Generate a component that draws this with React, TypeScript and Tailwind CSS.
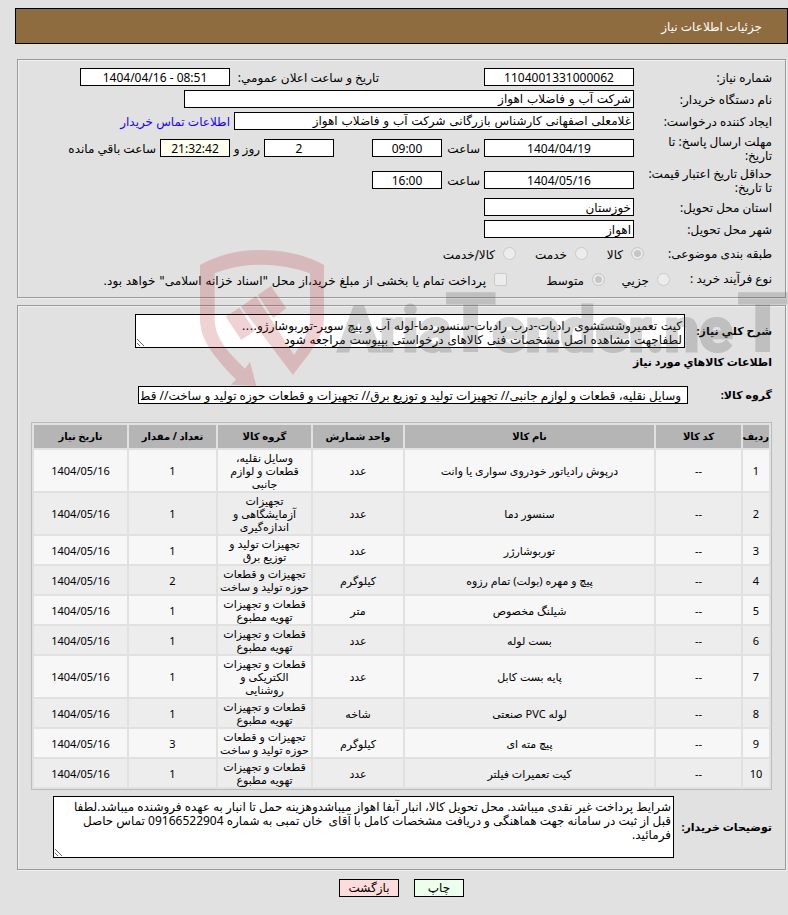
import type { ReactNode } from "react";

// ===================================================
// DATA
// ===================================================

const items = [
    { name: "درپوش رادیاتور خودروی سواری یا وانت", unit: "عدد", group: "وسایل نقلیه،\nقطعات و لوازم\nجانبی", count: 1 },
    { name: "سنسور دما", unit: "عدد", group: "تجهیزات\nآزمایشگاهی و\nاندازه‌گیری", count: 1 },
    { name: "توربوشارژر", unit: "عدد", group: "تجهیزات تولید و\nتوزیع برق", count: 1 },
    { name: "پیچ و مهره (بولت) تمام رزوه", unit: "کیلوگرم", group: "تجهیزات و قطعات\nحوزه تولید و ساخت", count: 2 },
    { name: "شیلنگ مخصوص", unit: "متر", group: "قطعات و تجهیزات\nتهویه مطبوع", count: 1 },
    { name: "بست لوله", unit: "عدد", group: "قطعات و تجهیزات\nتهویه مطبوع", count: 1 },
    { name: "پایه بست کابل", unit: "عدد", group: "قطعات و تجهیزات\nالکتریکی و\nروشنایی", count: 1 },
    { name: "لوله PVC صنعتی", unit: "شاخه", group: "قطعات و تجهیزات\nتهویه مطبوع", count: 1 },
    { name: "پیچ مته ای", unit: "کیلوگرم", group: "تجهیزات و قطعات\nحوزه تولید و ساخت", count: 3 },
    { name: "کیت تعمیرات فیلتر", unit: "عدد", group: "قطعات و تجهیزات\nتهویه مطبوع", count: 1 },
];

const description =
    "کیت تعمیروشستشوی رادیات-درب رادیات-سنسوردما-لوله آب و پیچ سوپر-توربوشارژو....\nلطفاجهت مشاهده اصل مشخصات فنی کالاهای درخواستی بپیوست مراجعه شود";

const buyerNotes =
    "شرایط پرداخت غیر نقدی میباشد. محل تحویل کالا، انبار آبفا اهواز میباشدوهزینه حمل تا انبار به عهده فروشنده میباشد.لطفا\nقبل از ثبت در سامانه جهت هماهنگی و دریافت مشخصات کامل با آقای  خان تمبی به شماره 09166522904 تماس حاصل\nفرمائید.";

const goodsGroups =
    "وسایل نقلیه، قطعات و لوازم جانبی// تجهیزات تولید و توزیع برق// تجهیزات و قطعات حوزه تولید و ساخت// قطعات و تجهیزات تهویه مطبوع";

const box = "h-[18px] border border-black px-[2px] text-[12px] leading-[14px]";

// ===================================================
// FORM PARTS
// ===================================================

function Row({ id, label, tall, children }: { id: string; label: ReactNode; tall?: boolean; children: ReactNode }) {
    return (
        <div className={`flex items-center ${tall ? "h-[30px]" : "h-5"}`}>
            <label htmlFor={id} className="w-[138px] shrink-0 pt-[2px] whitespace-nowrap">
                {label}
            </label>
            {children}
        </div>
    );
}

function Choice({
    type = "radio",
    name,
    label,
    checked,
    width,
}: {
    type?: "radio" | "checkbox";
    name: string;
    label: string;
    checked?: boolean;
    width: string;
}) {
    return (
        <label className={`flex items-center gap-2 font-['DejaVu_Sans',sans-serif] whitespace-nowrap ${width}`}>
            <input
                type={type}
                name={name}
                defaultChecked={checked}
                disabled
                className={`size-[13px] shrink-0 appearance-none border border-[#cacaca] bg-[#ececec] ${
                    type === "radio" ? "rounded-full" : "rounded-[2px]"
                } checked:bg-[#c6c6c6] checked:shadow-[inset_0_0_0_2px_#ececec]`}
            />
            <span className="pt-1">{label}</span>
        </label>
    );
}

// ===================================================
// WATERMARK
// ===================================================

function Watermark() {
    return (
        <svg
            aria-hidden="true"
            width="598"
            height="160"
            viewBox="0 0 598 160"
            className="pointer-events-none absolute top-[240px] right-0 z-10"
        >
            <g transform="scale(0.3333)" fill="#af141e" opacity="0.19">
                <path d="M30 75Q110 30 215 30Q320 30 402 75V235C402 290 370 325 309 405L153 200L198 168L312 345C350 290 360 265 360 235V100Q290 74 215 74Q140 74 74 100V235C74 295 112 335 165 386L180 365L199 438L122 434L138 418C60 340 30 290 30 235Z" />
                <path d="M107 230L148 203L194 272L154 300Z" />
                <path d="M203 165L243 138L289 205L250 235Z" />
            </g>
            <g
                direction="ltr"
                fill="#515151"
                stroke="#515151"
                strokeWidth="3"
                opacity="0.23"
                fontFamily="Roboto, 'Liberation Sans', sans-serif"
                fontWeight="700"
                fontSize="62"
            >
                <text x="148" y="111">Aria</text>
                <text x="256" y="111" fontSize="80">T</text>
                <text x="302" y="111">ender.ne</text>
                <text x="548" y="111" fontSize="80">T</text>
            </g>
        </svg>
    );
}

// ===================================================
// PAGE
// ===================================================

export default function App() {
    return (
        <div
            dir="rtl"
            className="relative min-h-screen overflow-hidden bg-[#e1e1e1] pt-2 pb-4 font-['Noto_Sans','DejaVu_Sans',sans-serif] text-[12px] leading-[14px] text-black"
        >
            <Watermark />

            {/* ========================================= */}
            {/* HEADER */}
            {/* ========================================= */}

            <header className="ml-[15px] flex h-9 items-center border border-black bg-[#8f6c40] pt-[2px] pr-[25px] text-white">
                <h1>جزئیات اطلاعات نیاز</h1>
            </header>

            {/* ========================================= */}
            {/* REQUEST INFO */}
            {/* ========================================= */}

            <section className="mt-[15px] mr-[2px] ml-[17px] border border-[#9a9a9a] shadow-[inset_1px_1px_0_#f0f0f0,1px_1px_0_#f0f0f0]">
                <div className="flex flex-col gap-[2px] pt-[7px] pr-[13px] pb-[6px]">
                    <Row id="number" label="شماره نیاز:">
                        <input id="number" readOnly className={`${box} w-[150px] bg-white text-center`} defaultValue="1104001331000062" />
                        <label htmlFor="announce" className="ms-[105px] w-[149px] pt-[2px] whitespace-nowrap">
                            تاریخ و ساعت اعلان عمومي:
                        </label>
                        <input id="announce" dir="ltr" readOnly className={`${box} w-[150px] bg-white text-center`} defaultValue="1404/04/16 - 08:51" />
                    </Row>

                    <Row id="buyer" label="نام دستگاه خریدار:">
                        <input
                            id="buyer"
                            readOnly
                            className={`${box} w-[450px] bg-white font-['DejaVu_Sans',sans-serif]`}
                            defaultValue="شرکت آب و فاضلاب اهواز"
                        />
                    </Row>

                    <Row id="creator" label="ایجاد کننده درخواست:">
                        <input
                            id="creator"
                            readOnly
                            className={`${box} w-[400px] bg-white font-['DejaVu_Sans',sans-serif]`}
                            defaultValue="غلامعلی اصفهانی کارشناس بازرگانی شرکت آب و فاضلاب اهواز"
                        />
                        <a href="#contact" className="ms-1 pt-[2px] whitespace-nowrap text-[#1a00ff]">
                            اطلاعات تماس خریدار
                        </a>
                    </Row>

                    <Row id="deadline" tall label={<>مهلت ارسال پاسخ: تا<br />تاریخ:</>}>
                        <input id="deadline" dir="ltr" readOnly className={`${box} w-[150px] bg-white text-center`} defaultValue="1404/04/19" />
                        <label htmlFor="deadline-time" className="ms-1 w-[38px] pt-[2px]">ساعت</label>
                        <input id="deadline-time" dir="ltr" readOnly className={`${box} w-[70px] bg-white text-center`} defaultValue="09:00" />
                        <input aria-label="روز" readOnly className={`${box} ms-[38px] w-[70px] bg-white text-center`} defaultValue="2" />
                        <label htmlFor="remaining" className="ms-1 w-[30px] pt-[2px] whitespace-nowrap">روز و</label>
                        <input id="remaining" dir="ltr" readOnly className={`${box} w-[70px] bg-[#fffff0] text-center`} defaultValue="21:32:42" />
                        <span className="ms-1 pt-[2px] whitespace-nowrap">ساعت باقي مانده</span>
                    </Row>

                    <Row id="validity" tall label={<>حداقل تاریخ اعتبار قیمت:<br />تا تاریخ:</>}>
                        <input id="validity" dir="ltr" readOnly className={`${box} w-[150px] bg-white text-center`} defaultValue="1404/05/16" />
                        <label htmlFor="validity-time" className="ms-1 w-[38px] pt-[2px]">ساعت</label>
                        <input id="validity-time" dir="ltr" readOnly className={`${box} w-[70px] bg-white text-center`} defaultValue="16:00" />
                    </Row>

                    <Row id="province" label="استان محل تحویل:">
                        <input id="province" readOnly className={`${box} w-[150px] bg-white`} defaultValue="خوزستان" />
                    </Row>

                    <Row id="city" label="شهر محل تحویل:">
                        <input id="city" readOnly className={`${box} w-[150px] bg-white`} defaultValue="اهواز" />
                    </Row>

                    <div role="radiogroup" aria-labelledby="category" className="flex h-6 items-center">
                        <span id="category" className="w-[128px] shrink-0 pt-[2px] whitespace-nowrap">طبقه بندی موضوعی:</span>
                        <Choice name="category" label="کالا" checked width="w-[56px]" />
                        <Choice name="category" label="خدمت" width="w-[72px]" />
                        <Choice name="category" label="کالا/خدمت" width="w-auto" />
                    </div>

                    <div role="group" aria-labelledby="process" className="flex h-6 items-center">
                        <span id="process" className="w-[102px] shrink-0 whitespace-nowrap">نوع فرآیند خرید :</span>
                        <Choice name="process" label="جزیي" width="w-[65px]" />
                        <Choice name="process" label="متوسط" checked width="w-[98px]" />
                        <Choice
                            type="checkbox"
                            name="treasury"
                            label='پرداخت تمام یا بخشی از مبلغ خرید،از محل "اسناد خزانه اسلامی" خواهد بود.'
                            width="w-auto"
                        />
                    </div>
                </div>
            </section>

            {/* ========================================= */}
            {/* GOODS INFO */}
            {/* ========================================= */}

            <section className="mt-[7px] mr-[2px] ml-[17px] border border-[#9a9a9a] pt-2 pr-[13px] pb-[11px] pl-[13px] shadow-[inset_1px_1px_0_#f0f0f0,1px_1px_0_#f0f0f0]">
                <div className="flex items-center">
                    <label htmlFor="description" className="w-[87px] shrink-0 text-[11px] font-bold whitespace-nowrap">
                        شرح کلي نیاز:
                    </label>
                    <textarea
                        id="description"
                        readOnly
                        className="h-[34px] w-[550px] resize overflow-hidden border border-black bg-white px-[2px] pt-1 font-['DejaVu_Sans',sans-serif]"
                        defaultValue={description}
                    />
                </div>

                <h2 className="mt-[7px] text-[11px] font-bold">اطلاعات کالاهاي مورد نیاز</h2>

                <div className="mt-[17px] flex items-center">
                    <label htmlFor="groups" className="w-[84px] shrink-0 text-[11px] font-bold whitespace-nowrap">
                        گروه کالا:
                    </label>
                    <input
                        id="groups"
                        readOnly
                        className="h-[18px] w-[550px] border border-black bg-white pr-[6px] pl-[2px]"
                        defaultValue={goodsGroups}
                    />
                </div>

                <table className="mt-[18px] w-full table-fixed border-separate border-spacing-[2px] border border-[#bbbbbb] text-center text-[11px] leading-[13px]">
                    <colgroup>
                        <col className="w-[26px]" />
                        <col className="w-[85px]" />
                        <col />
                        <col className="w-[90px]" />
                        <col className="w-[93px]" />
                        <col className="w-[87px]" />
                        <col className="w-[93px]" />
                    </colgroup>
                    <thead>
                        <tr className="h-[23px] bg-[#b5b5b5] text-[10px] whitespace-nowrap">
                            <th>ردیف</th>
                            <th>کد کالا</th>
                            <th>نام کالا</th>
                            <th>واحد شمارش</th>
                            <th>گروه کالا</th>
                            <th>تعداد / مقدار</th>
                            <th>تاریخ نیاز</th>
                        </tr>
                    </thead>
                    <tbody>
                        {items.map((item, idx) => (
                            <tr key={idx} className="odd:bg-[#f7f7f7] even:bg-[#ededed]">
                                <td>{idx + 1}</td>
                                <td>--</td>
                                <td>{item.name}</td>
                                <td>{item.unit}</td>
                                <td className="py-px whitespace-pre">{item.group}</td>
                                <td>{item.count}</td>
                                <td>1404/05/16</td>
                            </tr>
                        ))}
                    </tbody>
                </table>

                <div className="mt-[6px] flex items-center">
                    <label htmlFor="notes" className="w-[98px] shrink-0 text-[11px] font-bold whitespace-nowrap">
                        توضیحات خریدار:
                    </label>
                    <textarea
                        id="notes"
                        readOnly
                        className="h-[62px] w-[621px] resize overflow-hidden border border-black bg-white px-[2px] pt-[3px]"
                        defaultValue={buyerNotes}
                    />
                </div>
            </section>

            {/* ========================================= */}
            {/* ACTIONS */}
            {/* ========================================= */}

            <div className="mt-[9px] ml-[15px] flex justify-center gap-[15px]">
                <button type="button" className="h-[18px] w-[50px] border border-black bg-[#ecffec]">
                    چاپ
                </button>
                <button type="button" className="h-[18px] w-[60px] border border-black bg-[#ffdcdc]">
                    بازگشت
                </button>
            </div>
        </div>
    );
}
